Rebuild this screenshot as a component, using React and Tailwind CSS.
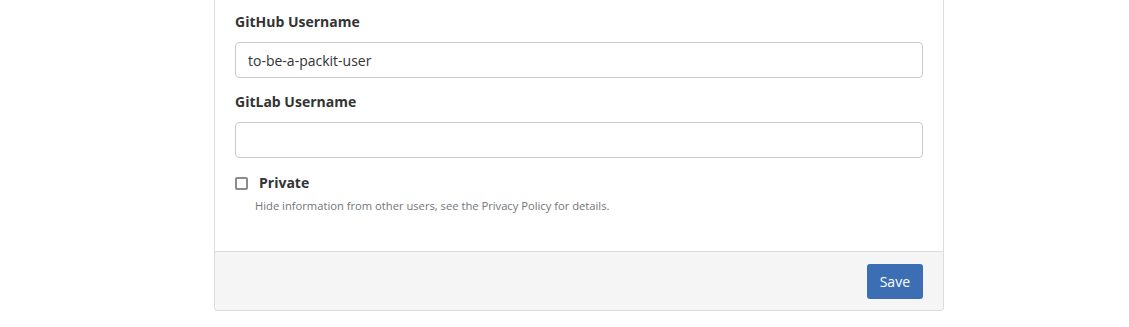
import { useState } from 'react';

export default function App() {
  const [github, setGithub] = useState('to-be-a-packit-user');
  const [gitlab, setGitlab] = useState('');
  const [isPrivate, setIsPrivate] = useState(false);

  return (
    <div className="w-full h-[327px] bg-white overflow-hidden" style={{ fontFamily: '"Open Sans", "Liberation Sans", sans-serif' }}>
      <div className="ml-[214px] w-[730px] border-x border-b border-[#dcdcdc] rounded-b-[4px] overflow-hidden">
        <div className="px-5 pt-3 pb-[37px]">
          <label className="block text-sm font-bold text-[#333] leading-5 mb-[10px]">GitHub Username</label>
          <input
            value={github}
            onChange={(e) => setGithub(e.target.value)}
            className="block w-full h-[36px] px-3 text-sm text-[#333] border border-[#ccc] rounded-[4px] outline-none"
          />
          <label className="block text-sm font-bold text-[#333] leading-5 mt-[14px] mb-[10px]">GitLab Username</label>
          <input
            value={gitlab}
            onChange={(e) => setGitlab(e.target.value)}
            className="block w-full h-[36px] px-3 text-sm text-[#333] border border-[#ccc] rounded-[4px] outline-none"
          />
          <div className="flex items-center mt-[15px] h-5">
            <input
              type="checkbox"
              checked={isPrivate}
              onChange={(e) => setIsPrivate(e.target.checked)}
              className="appearance-none w-[13px] h-[13px] border-2 border-[#8a8a94] rounded-[2px] bg-white checked:bg-[#3c6eb4] mr-[11px]"
            />
            <span className="text-sm font-bold text-[#333]">Private</span>
          </div>
          <p className="text-[11.2px] text-[#72767b] mt-[5px] ml-5 leading-4">
            Hide information from other users, see the Privacy Policy for details.
          </p>
        </div>
        <div className="flex justify-end bg-[#f5f5f5] border-t border-[#dcdcdc] px-5 pt-3 pb-[11px]">
          <button className="h-[35px] px-[13px] bg-[#3c6eb4] text-white text-sm rounded-[3px]">Save</button>
        </div>
      </div>
    </div>
  );
}
